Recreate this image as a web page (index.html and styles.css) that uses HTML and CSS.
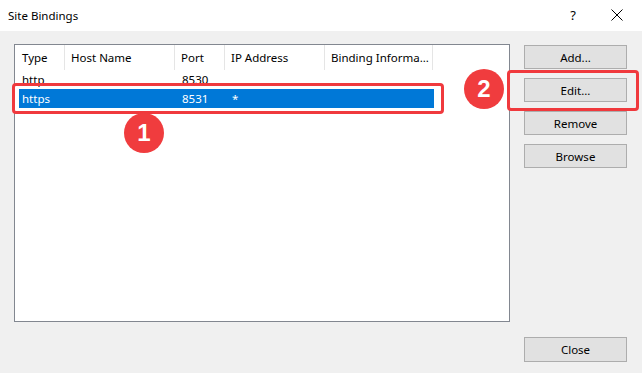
FILE: index.html
```html
<!DOCTYPE html>
<html lang="en">

<head>
    <meta charset="UTF-8">
    <title>Site Bindings</title>
    <link rel="stylesheet" href="styles.css">
</head>

<body>
    <div class="dialog">
        <div class="titlebar">
            <span class="title">Site Bindings</span>
            <span class="help">?</span>
            <svg class="close-x" width="12" height="12" viewBox="0 0 12 12">
                <path d="M0.5 0.5 L11.5 11.5 M11.5 0.5 L0.5 11.5" stroke="#000" stroke-width="1" fill="none" />
            </svg>
        </div>

        <div class="content">
            <div class="list">
                <div class="list-head">
                    <div class="col c-type">Type</div>
                    <div class="col c-host">Host Name</div>
                    <div class="col c-port">Port</div>
                    <div class="col c-ip">IP Address</div>
                    <div class="col c-info">Binding Informa...</div>
                </div>
                <div class="row">
                    <div class="cell c-type">http</div>
                    <div class="cell c-host"></div>
                    <div class="cell c-port">8530</div>
                    <div class="cell c-ip"></div>
                    <div class="cell c-info"></div>
                </div>
                <div class="row selected">
                    <div class="cell c-type">https</div>
                    <div class="cell c-host"></div>
                    <div class="cell c-port">8531</div>
                    <div class="cell c-ip">*</div>
                    <div class="cell c-info"></div>
                </div>
            </div>

            <div class="buttons">
                <button class="btn">Add...</button>
                <button class="btn">Edit...</button>
                <button class="btn">Remove</button>
                <button class="btn">Browse</button>
            </div>
        </div>

        <div class="footer">
            <button class="btn">Close</button>
        </div>

        <!-- annotations -->
        <div class="mark mark-row"></div>
        <div class="badge badge-1">1</div>
        <div class="mark mark-edit"></div>
        <div class="badge badge-2">2</div>
    </div>
</body>

</html>
```

FILE: styles.css
```css
body {
    margin: 0;
    font-family: "Segoe UI", "Noto Sans", sans-serif;
    font-size: 11.5px;
    color: #000;
    background: #f0f0f0;
}

.dialog {
    position: relative;
    width: 642px;
    height: 373px;
    background: #f0f0f0;
    overflow: hidden;
}

.titlebar {
    height: 31px;
    background: #fff;
    display: flex;
    align-items: center;
    padding-left: 8px;
}

.title {
    flex-grow: 1;
    margin-top: -1px;
}

.help {
    font-size: 13px;
    margin-right: 35px;
    margin-top: -2px;
}

.close-x {
    margin-right: 19px;
    margin-top: -1px;
}

.content {
    display: flex;
    gap: 14px;
    padding: 13px 0 0 14px;
}

.list {
    width: 494px;
    height: 276px;
    background: #fff;
    border: 1px solid #828790;
}

.list-head {
    display: flex;
    height: 25px;
    align-items: stretch;
}

.col,
.cell {
    box-sizing: border-box;
    white-space: nowrap;
    overflow: hidden;
}

.col {
    padding-left: 6px;
    border-right: 1px solid #e5e5e5;
    line-height: 26px;
}

.list-head .c-type {
    width: 50px;
    padding-left: 7px;
}

.c-host {
    width: 110px;
}

.c-port {
    width: 50px;
}

.c-ip {
    width: 100px;
}

.c-info {
    width: 108px;
}

.row {
    display: flex;
    margin-left: 4px;
    width: 415px;
    height: 19px;
    line-height: 20px;
}

.cell {
    padding-left: 7px;
}

.row .c-type {
    width: 46px;
    padding-left: 3px;
}

.row.selected {
    background: #0078d7;
    color: #fff;
}

.buttons {
    display: flex;
    flex-direction: column;
    gap: 9px;
    padding-top: 1px;
}

.btn {
    width: 103px;
    height: 24px;
    padding: 0;
    font-family: inherit;
    font-size: 11.5px;
    color: #000;
    background: #e1e1e1;
    border: 1px solid #adadad;
    border-radius: 0;
}

.footer {
    display: flex;
    justify-content: flex-end;
    padding-right: 15px;
    margin-top: 15px;
}

.footer .btn {
    height: 25px;
}

.mark {
    position: absolute;
    border: 3px solid #f0393d;
    border-radius: 4px;
}

.mark-row {
    left: 12px;
    top: 83px;
    width: 426px;
    height: 25px;
}

.mark-edit {
    left: 507px;
    top: 70px;
    width: 126px;
    height: 35px;
}

.badge {
    position: absolute;
    width: 40px;
    height: 40px;
    border-radius: 50%;
    background: #f03c3e;
    color: #fff;
    font-family: "Liberation Sans", Arial, sans-serif;
    font-weight: bold;
    font-size: 24px;
    line-height: 40px;
    text-align: center;
}

.badge-1 {
    left: 124px;
    top: 113px;
}

.badge-2 {
    left: 464px;
    top: 69px;
}
```
